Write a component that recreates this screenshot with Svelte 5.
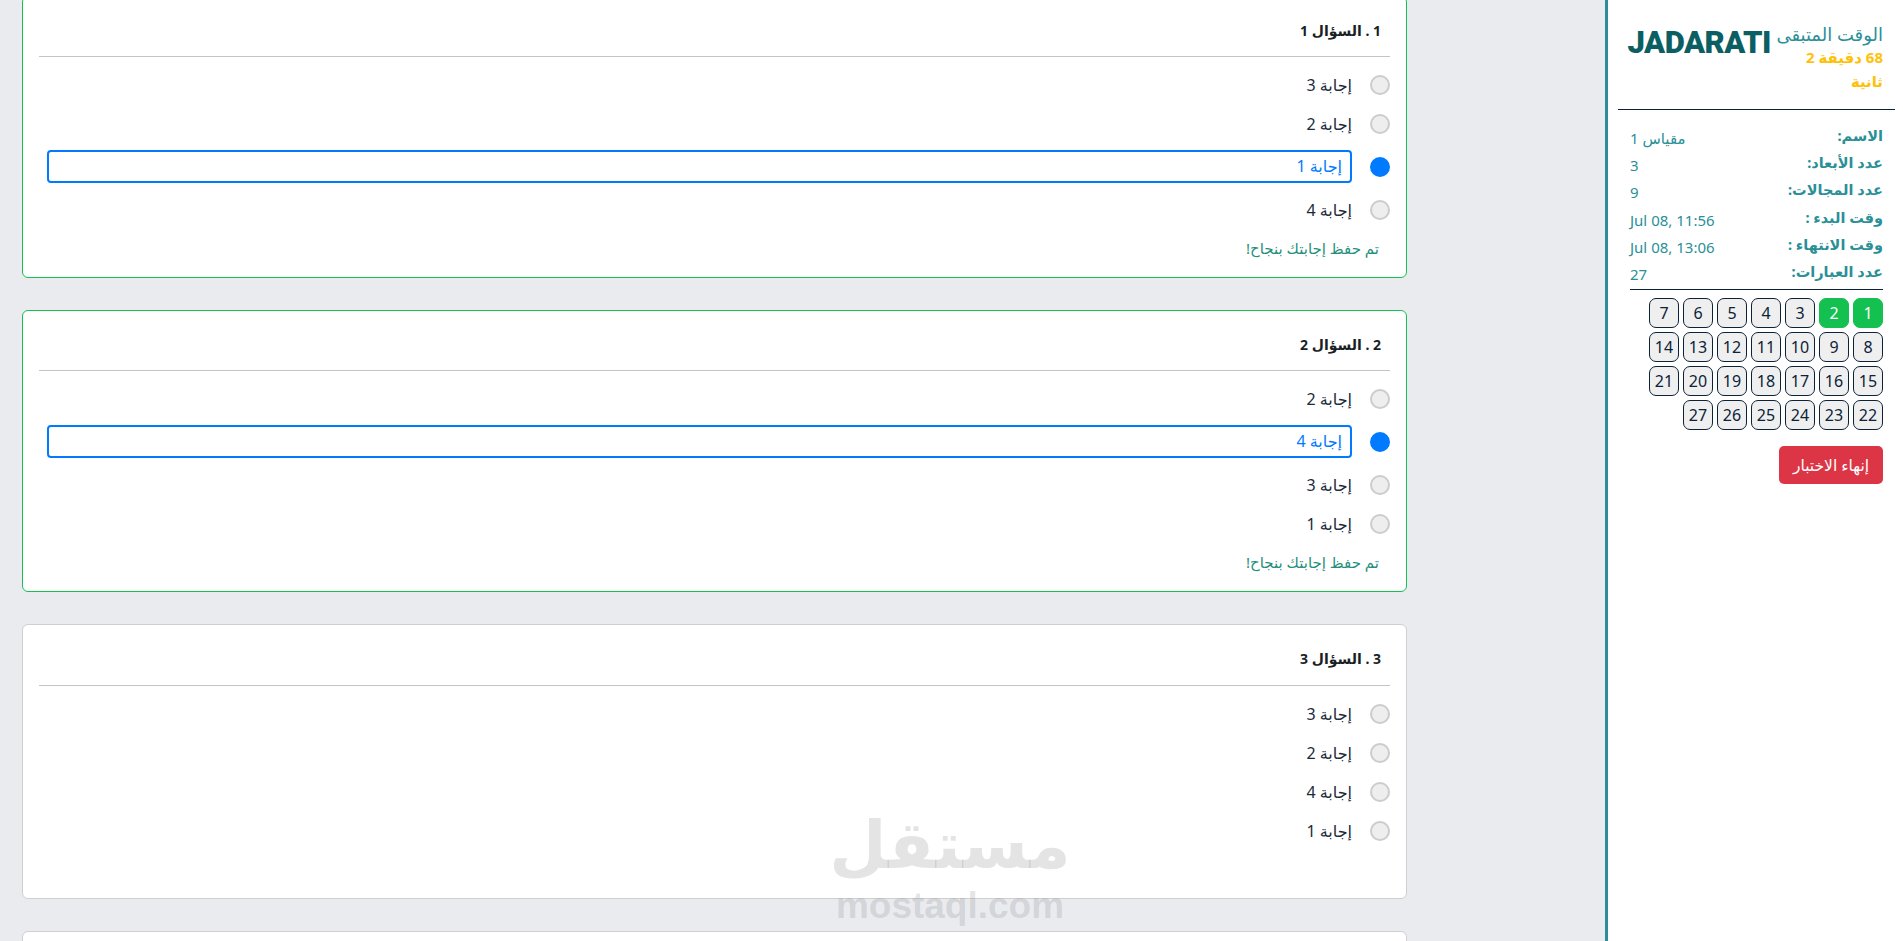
<script>
	const questions = [
		{ n: 1, options: [3, 2, 1, 4], selected: 1, saved: true },
		{ n: 2, options: [2, 4, 3, 1], selected: 4, saved: true },
		{ n: 3, options: [3, 2, 4, 1], selected: null, saved: false }
	];

	const info = [
		['الاسم:', 'مقياس 1'],
		['عدد الأبعاد:', '3'],
		['عدد المجالات:', '9'],
		['وقت البدء :', 'Jul 08, 11:56'],
		['وقت الانتهاء :', 'Jul 08, 13:06'],
		['عدد العبارات:', '27']
	];

	const numbers = Array.from({ length: 27 }, (_, i) => i + 1);
</script>

<div class="page" dir="rtl">
	<aside class="sidebar">
		<div class="top">
			<div class="timer">
				<div class="timer-label">الوقت المتبقى</div>
				<div class="timer-value">68 دقيقة 2 ثانية</div>
			</div>
			<div class="logo" dir="ltr">JADARATI</div>
		</div>
		<div class="info">
			{#each info as [label, value]}
				<div class="info-row">
					<span class="info-label">{label}</span>
					<span class="info-value">{value}</span>
				</div>
			{/each}
		</div>
		<div class="nav-grid">
			{#each numbers as num}
				<button class="nav-btn" class:done={num <= 2}>{num}</button>
			{/each}
		</div>
		<button class="finish">إنهاء الاختبار</button>
	</aside>

	<main class="main">
		{#each questions as q}
			<section class="card" class:saved={q.saved}>
				<h3 class="title">{q.n} . السؤال {q.n}</h3>
				<ul class="options">
					{#each q.options as opt}
						<li class="option" class:selected={q.selected === opt}>
							<span class="radio"></span>
							<span class="label">إجابة {opt}</span>
						</li>
					{/each}
				</ul>
				{#if q.saved}
					<p class="msg">تم حفظ إجابتك بنجاح!</p>
				{/if}
			</section>
		{/each}
		<section class="card"></section>
	</main>

	<div class="watermark" aria-hidden="true">
		<div class="wm-ar">مستقل</div>
		<div class="wm-en" dir="ltr">mostaql.com</div>
	</div>
</div>

<style>
	:global(body) {
		margin: 0;
		background: #e9ebef;
	}

	.page {
		position: relative;
		display: flex;
		height: 941px;
		overflow: hidden;
		font-family: "Noto Sans", "DejaVu Sans", sans-serif;
		color: #1c2b3a;
		background: #e9ebef;
	}

	.main {
		flex: 1;
		padding: 0 198px 0 22px;
		margin-top: -4px;
	}

	.card {
		box-sizing: border-box;
		background: #fff;
		border: 1px solid #cfcfd2;
		border-radius: 6px;
		padding: 0 16px;
		margin-bottom: 32px;
		height: 275px;
	}

	.card.saved {
		height: 282px;
		border-color: #14c050;
	}

	.title {
		margin: 0;
		height: 61px;
		box-sizing: border-box;
		padding: 24px 9px 0 0;
		font-size: 14px;
		line-height: 20px;
		font-weight: 700;
		color: #1a1f26;
		border-bottom: 1px solid #c4c4c4;
	}

	.card.saved .title {
		height: 60px;
	}

	.options {
		list-style: none;
		margin: 0;
		padding: 14px 0 0;
		display: flex;
		flex-direction: column;
		gap: 12px;
	}

	.option {
		display: flex;
		align-items: center;
		gap: 18px;
		min-height: 27px;
		font-size: 16px;
	}

	.radio {
		box-sizing: border-box;
		width: 20px;
		height: 20px;
		border-radius: 50%;
		background: #eee;
		border: 2px solid #ccc;
		flex: none;
	}

	.label {
		flex: 1;
		line-height: 20px;
	}

	.option.selected {
		margin: 1px 0;
	}

	.option.selected .radio {
		background: #007bff;
		border-color: #007bff;
	}

	.option.selected .label {
		box-sizing: border-box;
		height: 33px;
		line-height: 29px;
		padding: 0 8px;
		margin-left: 8px;
		border: 2px solid #007bff;
		border-radius: 4px;
		color: #007bff;
	}

	.msg {
		margin: 15px 11px 0 0;
		font-size: 15px;
		line-height: 20px;
		color: #1f8f7c;
	}

	.sidebar {
		box-sizing: border-box;
		width: 298px;
		flex: none;
		background: #fff;
		border-left: 3px solid #2a8f97;
		padding: 0 8px 0 10px;
	}

	.top {
		display: flex;
		justify-content: space-between;
		padding: 22px 12px 0;
		height: 110px;
		box-sizing: border-box;
		border-bottom: 1px solid #0b2239;
	}

	.timer {
		width: 112px;
		font-size: 15px;
		line-height: 24px;
		color: #2a8f97;
		flex: none;
	}

	.timer-label {
		font-size: 18px;
		white-space: nowrap;
	}

	.timer-value {
		font-weight: 700;
		color: #ffc107;
		margin-top: -1px;
	}

	.logo {
		font-family: Roboto, Inter, sans-serif;
		font-weight: 900;
		font-size: 31px;
		line-height: 42px;
		letter-spacing: -0.5px;
		color: #0b5f63;
	}

	.info {
		margin: 0 12px;
		padding: 13px 0 3px;
		border-bottom: 1px solid #0b2239;
		display: flex;
		flex-direction: column;
	}

	.info-row {
		display: flex;
		justify-content: space-between;
		height: 27.2px;
		font-size: 14.5px;
		line-height: 24px;
		color: #2a8f97;
	}

	.info-label {
		font-weight: 700;
	}

	.info-value {
		padding-top: 3px;
		width: 85px;
		text-align: left;
		font-size: 15px;
		white-space: nowrap;
		unicode-bidi: plaintext;
	}

	.nav-grid {
		display: flex;
		flex-wrap: wrap;
		gap: 4px;
		margin: 8px 12px 0;
		width: 240px;
	}

	.nav-btn {
		box-sizing: border-box;
		width: 30px;
		height: 30px;
		padding: 0;
		border: 1px solid #0b2239;
		border-radius: 7px;
		background: #efefef;
		color: #0b2239;
		font-family: inherit;
		font-size: 16px;
	}

	.nav-btn.done {
		background: #14c050;
		border-color: #14c050;
		color: #fff;
	}

	.finish {
		display: block;
		margin: 16px 12px 0 0;
		width: 104px;
		height: 38px;
		padding: 0;
		border: none;
		border-radius: 5px;
		background: #dc3545;
		color: #fff;
		font-family: inherit;
		font-size: 15.5px;
	}

	.watermark {
		position: absolute;
		left: 820px;
		top: 808px;
		width: 260px;
		text-align: center;
		color: rgba(120, 120, 125, 0.2);
		pointer-events: none;
		font-family: "DejaVu Sans", sans-serif;
		font-weight: 700;
	}

	.wm-ar {
		font-size: 66px;
		line-height: 76px;
	}

	.wm-en {
		font-family: "Liberation Sans", sans-serif;
		font-size: 37px;
		line-height: 36px;
		margin-top: 4px;
	}
</style>
